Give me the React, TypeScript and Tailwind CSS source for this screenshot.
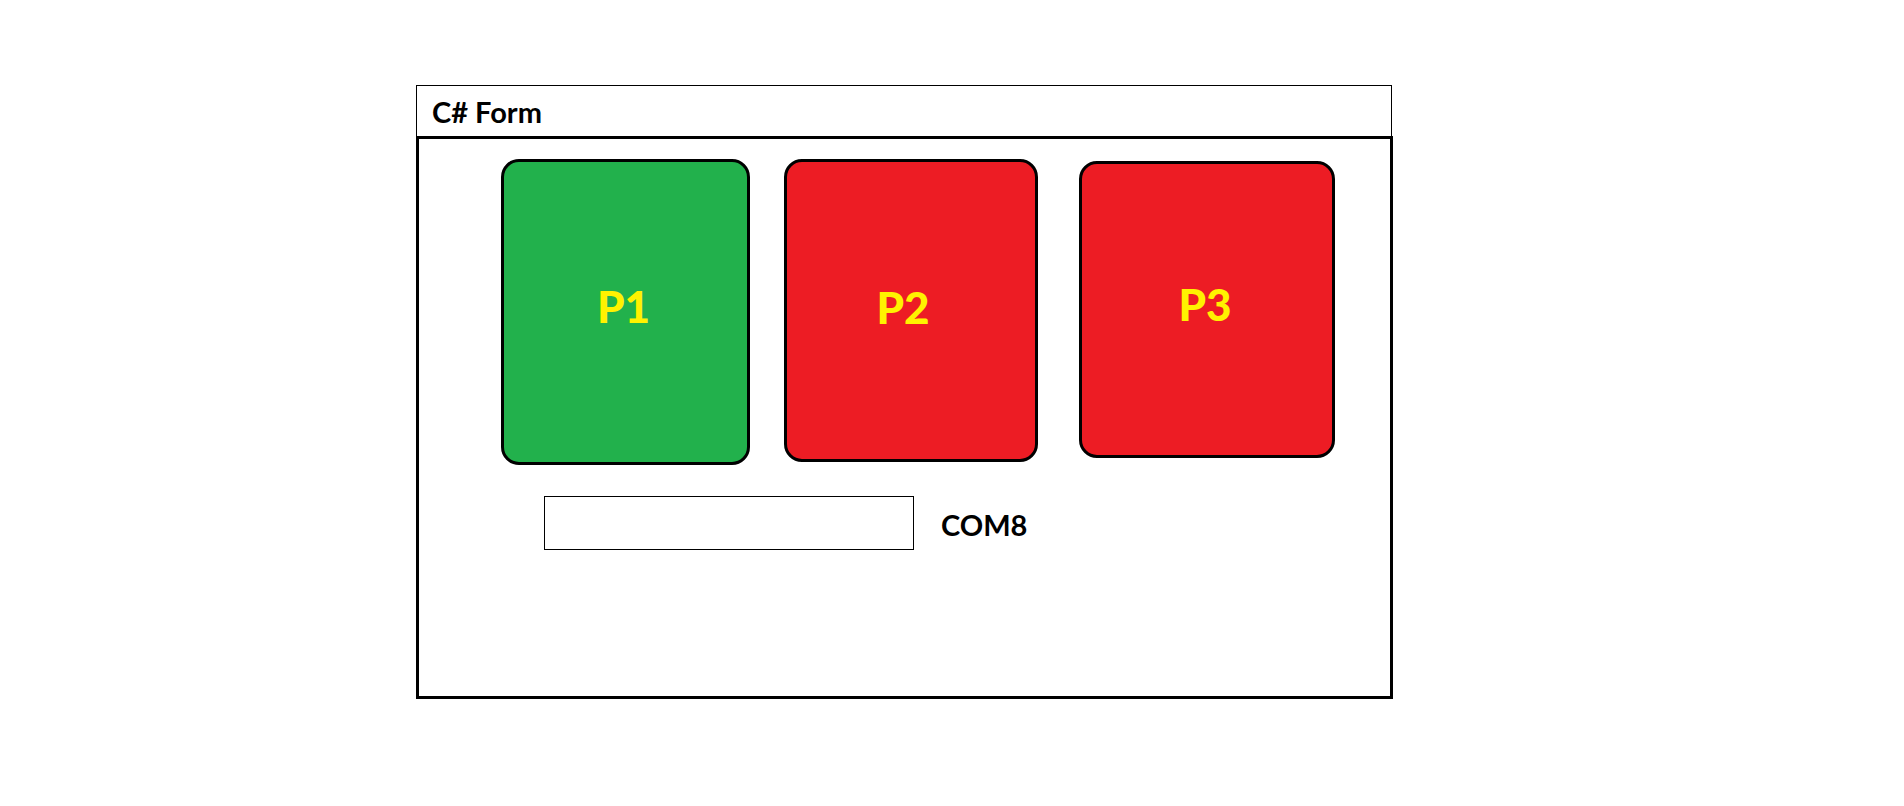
const ports = [
  { name: "P1", place: "col-start-1 min-h-[306px] pb-3 pr-1 bg-[#22b14c]" },
  { name: "P2", place: "col-start-3 min-h-[303px] pb-2 pr-4 bg-[#ed1c24]" },
  { name: "P3", place: "col-start-5 min-h-[297px] pb-3 pr-1 mt-0.5 bg-[#ed1c24]" },
];

export default function App() {
  return (
    <main className="grid min-h-screen grid-cols-[416fr_977fr_511fr] bg-white pt-[85px] font-['Lato','Liberation_Sans',sans-serif] font-bold text-black">
      <section className="col-start-2 flex flex-col self-start">
        <header className="mr-px border border-b-0 border-black pt-2.5 pb-2 pl-[15px]">
          <h1 className="text-[29px] leading-8 font-bold">C# Form</h1>
        </header>
        <form
          className="min-h-[563px] border-[3px] border-black pt-5 pr-[55px] pl-[82px]"
          onSubmit={(e) => e.preventDefault()}
        >
          <div className="grid min-h-[306px] grid-cols-[249fr_34fr_254fr_41fr_256fr] items-start">
            {ports.map((port) => (
              <button
                key={port.name}
                type="button"
                className={`row-start-1 flex items-center justify-center rounded-[18px] border-[3px] border-black text-[44px] leading-none font-black text-[#fff200] ${port.place}`}
              >
                {port.name}
              </button>
            ))}
          </div>
          <div className="mt-[31px] flex items-center pl-[43px]">
            <input
              id="port"
              type="text"
              className="h-[54px] w-[370px] min-w-0 border border-black bg-white px-3 text-[29px]"
            />
            <label htmlFor="port" className="pt-1 pl-[27px] text-[29px] leading-8">
              COM8
            </label>
          </div>
        </form>
      </section>
    </main>
  );
}
